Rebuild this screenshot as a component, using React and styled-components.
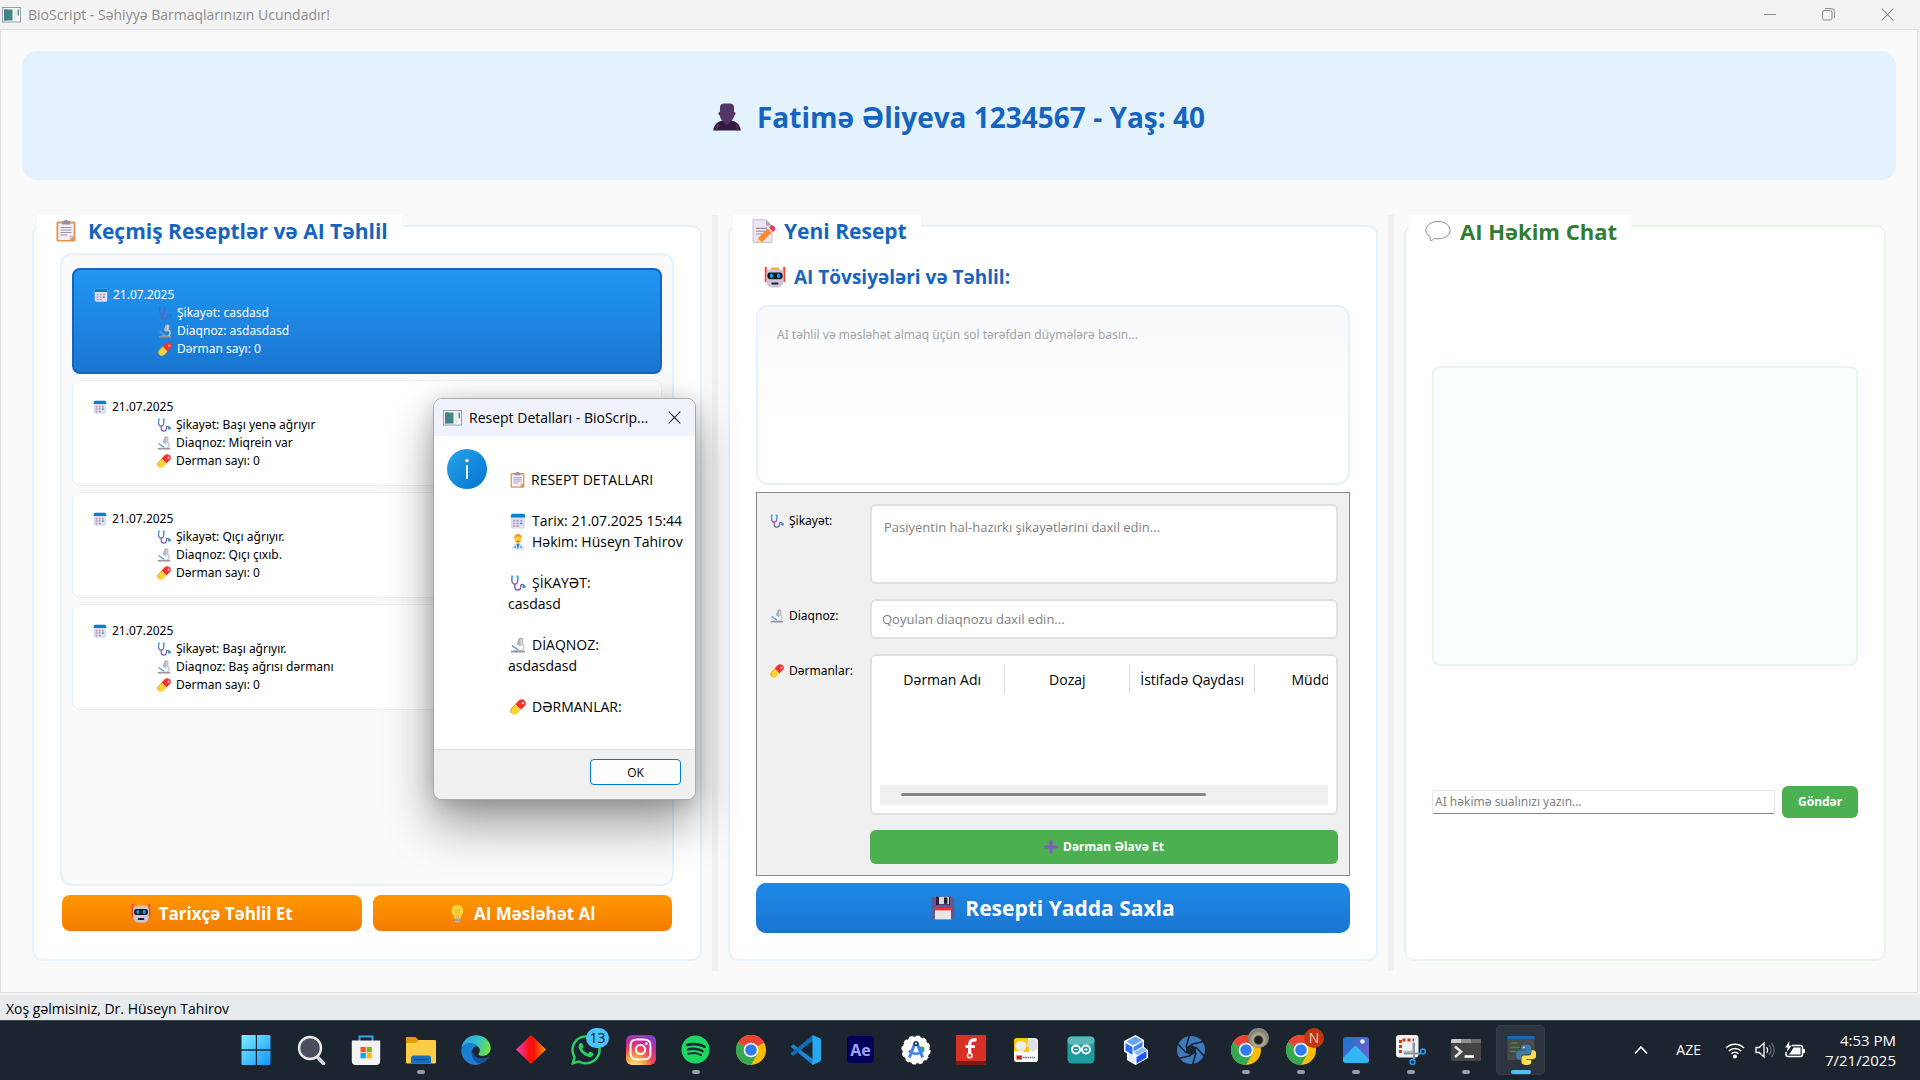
import React from "react";
import styled, { createGlobalStyle, css } from "styled-components";
import { FaWhatsapp, FaInstagram, FaSpotify } from "react-icons/fa";

const GlobalStyle = createGlobalStyle`
  *, *::before, *::after { box-sizing: border-box; }
  body { margin: 0; background: #1c2430; }
  body, button, input, textarea, table {
    font-family: "Open Sans", "Noto Sans", sans-serif;
  }
  h1, h2, h3, p, ul { margin: 0; padding: 0; }
`;

const smallText = css`
  font-family: "Noto Sans", "Open Sans", sans-serif;
  font-size: 12px;
  line-height: 18px;
`;

/* ---------- Icons ---------- */

const Glyph = styled.svg`
  flex: none;
  display: block;
  width: ${(p) => p.$w || p.$size || 16}px;
  height: ${(p) => p.$size || 16}px;
`;

const Clipboard = ({ size }) => (
  <Glyph viewBox="0 0 20 22" $w={Math.round((size * 20) / 22)} $size={size} aria-hidden="true">
    <rect x="0.5" y="1.5" width="19" height="20" rx="1.2" fill="#e19747" />
    <path d="M2.3 3.5h15.4v12l-4 4.5H2.3z" fill="#f3eef8" />
    <path d="M17.7 15.5h-4V20z" fill="#cdc4d6" />
    <path d="M6 1h2.200a1.800 1.400 0 0 1 3.600 0H14v3.400H6z" fill="#998ea4" />
    <path d="M4.500 7.500h11M4.500 10h11M4.500 12.500h11M4.500 15h6.500" stroke="#998ea4" strokeWidth="1" />
  </Glyph>
);

const Calendar = ({ size }) => (
  <Glyph viewBox="0 0 16 16" $size={size} aria-hidden="true">
    <rect x="0.800" y="0.800" width="14.400" height="15" rx="2" fill="#e3dcee" />
    <path d="M.8 4.600V2.800a2 2 0 0 1 2-2h10.400a2 2 0 0 1 2 2v1.800z" fill="#0084ce" />
    <rect x="3" y="6.800" width="2.200" height="1.600" fill="#a79bbd" />
    <rect x="6.600" y="6.800" width="2.200" height="1.600" fill="#a79bbd" />
    <rect x="10.200" y="6.800" width="2.200" height="1.600" fill="#a79bbd" />
    <rect x="3" y="9.600" width="2.200" height="1.600" fill="#a79bbd" />
    <rect x="6.600" y="9.600" width="2.200" height="1.600" fill="#a79bbd" />
    <rect x="10.200" y="9.600" width="2.200" height="1.600" fill="#1e9bea" />
    <rect x="3" y="12.400" width="2.200" height="1.600" fill="#a79bbd" />
    <rect x="6.600" y="12.400" width="2.200" height="1.600" fill="#a79bbd" />
  </Glyph>
);

const Stethoscope = ({ size, dim }) => (
  <Glyph viewBox="0 0 16 16" $size={size} aria-hidden="true" fill="none" strokeLinecap="round">
    <path d="M1.800 2v2.800c0 2.400 1.300 4.400 3 4.400s3-2 3-4.400V2" stroke={dim ? "#5a63b4" : "#7a63ad"} strokeWidth="1.400" />
    <path d="M4.800 9.200v2.800a3 3 0 0 0 6 0v-1.400c0-1.400 2.600-1.600 3.100.2" stroke={dim ? "#5a63b4" : "#7a63ad"} strokeWidth="1.400" />
    <path d="M1.800 3.600V1.200h1M7.800 3.600V1.200h-1" stroke={dim ? "#0d84dd" : "#37b4f4"} strokeWidth="1.500" />
    <circle cx="14.100" cy="11.600" r="1.700" fill={dim ? "#0d84dd" : "#1f9bf2"} />
  </Glyph>
);

const Microscope = ({ size }) => (
  <Glyph viewBox="0 0 16 16" $size={size} aria-hidden="true">
    <path d="M11.600 6.600c2.800 1.400 3 5 .4 7.200" fill="none" stroke="#cfcfd4" strokeWidth="1.800" />
    <path d="m8.600 1.200 2.800-.8 1.800 1.600-.4 4-2.600 3.200-3.600-2z" fill="#b3b3b8" />
    <path d="m10.400 1.400 1.800 1.400-.6 3.600-1.600 1.400z" fill="#d3d3d8" />
    <path d="m2.400 8.800 5 3.600" stroke="#5b9cf6" strokeWidth="1.500" strokeLinecap="round" />
    <path d="M4 13.600h9" stroke="#b8b8bd" strokeWidth="1" />
    <rect x="0.800" y="13.800" width="14.400" height="1.700" rx="0.500" fill="#96969c" />
  </Glyph>
);

const Pill = ({ size }) => (
  <Glyph viewBox="0 0 16 16" $size={size} aria-hidden="true">
    <g transform="rotate(45 8 8)">
      <path d="M4 8V2.900a4 4 0 0 1 8 0V8z" fill="#f8312f" />
      <path d="M4 8v5.100a4 4 0 0 0 8 0V8z" fill="#fdd13a" />
      <path d="M4.600 8v5c0 2 1.400 3.400 3.400 3.500" fill="none" stroke="#e9a520" strokeWidth="1" />
    </g>
    <circle cx="13" cy="4.200" r="1.100" fill="#fff" />
  </Glyph>
);

const Memo = ({ size }) => (
  <Glyph viewBox="0 0 24 24" $size={size} aria-hidden="true">
    <path d="M1 .8h13l6 6V23.400H1z" fill="#ece5f3" stroke="#bdb2c9" strokeWidth="0.800" />
    <path d="M14 .8v6h6z" fill="#b4a9c0" />
    <path d="M4 9.400h11M4 12.200h9M4 15h6" stroke="#998ea4" strokeWidth="1.100" />
    <path d="m6 19.200 9.600-9.600 4 4-9.600 9.600-5 .6z" fill="#ff8a2b" />
    <path d="m6 19.200 4 4-5 .6z" fill="#f5d3a8" />
    <path d="m17 8.200 1.400-1a2.400 2.400 0 0 1 3.600.2l.9 1.400a2.400 2.400 0 0 1-.3 2.800l-1.600 1.400z" fill="#f8315c" />
  </Glyph>
);

const Robot = ({ size }) => (
  <Glyph viewBox="0 0 22 22" $size={size} aria-hidden="true">
    <path d="M1.800 1v15M20.200 1v15" stroke="#f8412f" strokeWidth="2" />
    <rect x="7" y="1.400" width="8" height="3" rx="1" fill="#ffa726" />
    <path d="M5.400 3.600h11.200a3 3 0 0 1 3 3v8.200c0 4-2.600 6.600-5.400 6.600H7.800c-2.800 0-5.400-2.600-5.400-6.600V6.600a3 3 0 0 1 3-3z" fill="#cfc5da" />
    <rect x="3.400" y="6.600" width="15.200" height="6.600" rx="2.400" fill="#1c1c1c" />
    <rect x="6" y="7.800" width="3" height="4.200" rx="1.200" fill="#0aa2ee" />
    <rect x="13" y="7.800" width="3" height="4.200" rx="1.200" fill="#0aa2ee" />
    <rect x="7.400" y="16.400" width="7.200" height="2.200" rx="1" fill="#212121" />
  </Glyph>
);

const Bulb = ({ size }) => (
  <Glyph viewBox="0 0 18 20" $size={size} $w={size - 2} aria-hidden="true">
    <path d="M9 .8a6.300 6.300 0 0 1 6.300 6.300c0 3.400-2.500 4.600-2.900 8.100H5.600C5.200 11.700 2.700 10.500 2.700 7.100A6.300 6.300 0 0 1 9 .8z" fill="#fcd53f" />
    <path d="M7 6.200 8 14.800M11 6.200 10 14.800M6.500 6.200h5" stroke="#f9a825" strokeWidth="1" fill="none" />
    <path d="M6 15.200h6v2.600a1.600 1.600 0 0 1-1.600 1.600H7.600A1.600 1.600 0 0 1 6 17.800z" fill="#bdb7c9" />
    <path d="M6 17h6" stroke="#8a8198" strokeWidth="0.900" />
  </Glyph>
);

const Floppy = ({ size }) => (
  <Glyph viewBox="0 0 24 24" $size={size} aria-hidden="true">
    <path d="M.6.8H21l2.400 2.400v20H.6z" fill="#635994" />
    <rect x="4" y="14" width="16" height="9.400" fill="#e6e6e6" />
    <rect x="4" y="12" width="16" height="2.400" fill="#f8312f" />
    <rect x="5" y=".8" width="14" height="8.200" fill="#321b41" />
    <path d="M8 .8h10v7.400H8z" fill="#d9d9de" />
    <rect x="13" y="1.400" width="3.400" height="6.400" fill="#1c1c2c" />
  </Glyph>
);

const Plus = ({ size }) => (
  <Glyph viewBox="0 0 14 14" $size={size} aria-hidden="true">
    <path d="M7 1.400v11.200M1.400 7h11.200" stroke="#8457c7" strokeWidth="2.800" strokeLinecap="round" />
  </Glyph>
);

const Speech = () => (
  <Glyph viewBox="0 0 26 22" $w={26} $size={22} aria-hidden="true">
    <path d="M13 1.400c6.700 0 12.100 4 12.100 9s-5.400 8.400-12.100 8.400c-1.300 0-2.400.1-3.500-.4-1 .6-2.600 2.600-3.900 2.200-.8-.4-.2-2.400-.6-4.200C2.300 14.800.9 12.800.9 10.400c0-5 5.400-9 12.100-9z" fill="#fff" stroke="#8b8b8b" strokeWidth="1" />
  </Glyph>
);

const Person = () => (
  <Glyph viewBox="0 0 28 28" $size={28} aria-hidden="true">
    <path d="M.2 27.600c.6-5 3.600-9 8.600-9.800h10.400c5 .8 8 4.800 8.600 9.800z" fill="#321b41" />
    <path d="M3.600 27.600c.2-2.800.4-4 1.400-6.200M24.400 27.600c-.2-2.800-.4-4-1.400-6.200" stroke="#5b3a6e" strokeWidth="1.200" fill="none" />
    <path d="M7 4.600C7 1.800 8.800.4 11 .4h6c2.200 0 4 1.400 4 4.200v4.200c1.800 0 2.200 3.200.3 3.600-.5 2.600-1.900 4.600-3.500 6L14 22l-3.800-3.600c-1.600-1.400-3-3.400-3.500-6-1.900-.4-1.500-3.600.3-3.600z" fill="#533566" />
  </Glyph>
);

const Doctor = ({ size }) => (
  <Glyph viewBox="0 0 16 16" $size={size} aria-hidden="true">
    <path d="M2 15.800c0-4 2-6 4-6h4c2 0 4 2 4 6z" fill="#dfe3ea" />
    <path d="m6.400 9.600 1.600 6 1.600-6z" fill="#2a86d8" />
    <circle cx="5" cy="13" r="1" fill="#3fa3ef" />
    <circle cx="11" cy="13" r="1" fill="#3fa3ef" />
    <path d="M4.600 4.600a3.400 3.800 0 0 1 6.800 0c0 3-1.400 5.200-3.400 5.200S4.600 7.600 4.600 4.600z" fill="#ffc93b" />
    <path d="M4.300 5C3.800 1.800 6 0 8 0s4.200 1.800 3.700 5C11 2.800 9.600 2.400 8 2.400S5 2.800 4.300 5z" fill="#e79a22" />
    <path d="M6.800 7.400h2.400" stroke="#b02e38" strokeWidth="0.900" />
  </Glyph>
);

const WindowIcon = () => (
  <Glyph viewBox="0 0 19 16" $w={19} $size={16} aria-hidden="true">
    <rect x="0.500" y="0.500" width="18" height="14.500" fill="#f7f7f7" stroke="#98a0a6" />
    <rect x="2" y="2.500" width="8.500" height="11" fill="#3d8b7c" />
    <rect x="2" y="2.500" width="3.500" height="11" fill="#4a76a8" opacity="0.800" />
    <rect x="12" y="2.500" width="2.500" height="11" fill="#e6eaec" />
    <rect x="15.500" y="2.500" width="1.500" height="6" fill="#4d9a8a" />
  </Glyph>
);

const CloseMark = ({ color }) => (
  <Glyph viewBox="0 0 13 13" $size={13} aria-hidden="true">
    <path d="M.7.7l11.600 11.600M12.300.7.7 12.300" stroke={color} strokeWidth="1.100" />
  </Glyph>
);

/* ---------- Window shell ---------- */

const Desktop = styled.div`
  display: flex;
  flex-direction: column;
  min-height: 100vh;
  background: #f3f3f3;
  color: #000;
`;

const TitleBar = styled.header`
  display: flex;
  align-items: center;
  height: 29px;
  padding: 0 3px 0 2px;
  gap: 7px;
  font-size: 14px;
  line-height: 20px;
  color: #8b8b8b;
`;

const TitleText = styled.span`
  flex: 1;
`;

const WindowControls = styled.div`
  display: flex;
  align-items: center;
`;

const WindowButton = styled.button`
  display: flex;
  align-items: center;
  justify-content: center;
  width: 58px;
  height: 28px;
  padding: 0;
  border: 0;
  background: none;
  color: #8b8b8b;

  &:last-child {
    width: 60px;
  }
`;

const Workspace = styled.main`
  flex: 1;
  display: flex;
  flex-direction: column;
  gap: 35px;
  margin-right: 2px;
  padding: 21px;
  border: 1px solid #e1e1e1;
  background: #f9f9f9;
`;

const PatientBanner = styled.div`
  display: flex;
  align-items: center;
  justify-content: center;
  gap: 16px;
  height: 129px;
  padding-top: 2px;
  border-radius: 15px;
  background: #e3f2fd;
  color: #1565c0;
`;

const PatientName = styled.h1`
  font-size: 28px;
  line-height: 40px;
  font-weight: 700;
`;

const Columns = styled.div`
  flex: 1;
  display: grid;
  grid-template-columns: minmax(0, 690fr) 6px minmax(0, 670fr) 6px minmax(0, 502fr);
`;

const Splitter = styled.div`
  background: #f0f0f0;
`;

const Panel = styled.section`
  display: flex;
  flex-direction: column;
  margin: 10px;
  border: 2px solid ${(p) => (p.$tone === "green" ? "#e8f5e9" : "#e3f2fd")};
  border-radius: 10px;
  background: #fff;
`;

const PanelTitle = styled.h2`
  align-self: flex-start;
  display: flex;
  align-items: center;
  gap: ${(p) => p.$gap}px;
  height: 32px;
  margin: -12px 0 0 3px;
  padding: 0 14px 0 ${(p) => (p.$tone === "green" ? 16 : 19)}px;
  background: #fff;
  color: ${(p) => (p.$tone === "green" ? "#2e7d32" : "#1565c0")};
  font-size: ${(p) => (p.$tone === "green" ? 22 : 21)}px;
  line-height: 30px;
  font-weight: 700;
`;

const PanelBody = styled.div`
  flex: 1;
  display: flex;
  flex-direction: column;
  padding: 6px 26px 26px;
`;

/* ---------- History ---------- */

const HistoryList = styled.ul`
  flex: 1;
  display: flex;
  flex-direction: column;
  gap: 6px;
  padding: 13px 10px;
  border: 2px solid #e3f2fd;
  border-radius: 12px;
  background: #fafafa;
  list-style: none;
`;

const HistoryItem = styled.li`
  ${smallText}
  display: flex;
  flex-direction: column;
  height: 106px;
  padding: 17px 20px;
  border: 1px solid #e3f2fd;
  border-radius: 8px;
  background: #fff;

  ${(p) =>
    p.$selected &&
    css`
      padding: 16px 20px;
      border: 2px solid #1565c0;
      background: linear-gradient(#2196f3, #1976d2);
      color: #fff;
    `}
`;

const HistoryLine = styled.p`
  display: flex;
  align-items: center;
  gap: 5px;
  padding-left: ${(p) => (p.$nested ? 64 : 0)}px;
`;

const ButtonRow = styled.div`
  display: grid;
  grid-template-columns: 1fr 1fr;
  gap: 11px;
  padding: 9px 2px 2px;
`;

const Button = styled.button`
  display: flex;
  align-items: center;
  justify-content: center;
  gap: 8px;
  padding: 0;
  border: 0;
  color: #fff;
  font-weight: 700;
`;

const OrangeButton = styled(Button)`
  height: 36px;
  border-radius: 8px;
  background: linear-gradient(#ff9800, #f57c00);
  font-size: 17px;
`;

const GreenButton = styled(Button)`
  ${smallText}
  height: ${(p) => p.$height}px;
  border-radius: 6px;
  background: #4caf50;
  gap: 5px;
`;

const SaveButton = styled(Button)`
  height: 50px;
  margin-top: 7px;
  gap: 10px;
  border-radius: 10px;
  background: linear-gradient(#1e88e5, #1976d2);
  font-size: 21px;
`;

/* ---------- Prescription form ---------- */

const AdviceLabel = styled.label`
  display: flex;
  align-items: center;
  gap: 8px;
  height: 52px;
  padding: 0 8px 4px;
  color: #1565c0;
  font-size: 19px;
  line-height: 28px;
  font-weight: 700;
`;

const AdviceBox = styled.textarea`
  ${smallText}
  flex: 1;
  min-height: 180px;
  padding: 19px 19px;
  border: 2px solid #e3f2fd;
  border-radius: 12px;
  background: linear-gradient(#f8f9fa, #fff 70%);
  resize: none;
  outline: none;

  &::placeholder {
    color: #9ea3a8;
    opacity: 1;
  }
`;

const FormFrame = styled.form`
  display: grid;
  grid-template-columns: 102px minmax(0, 1fr);
  row-gap: 15px;
  margin-top: 7px;
  padding: 11px;
  border: 1px solid #828790;
  background: #f0f0f0;
`;

const FieldLabel = styled.label`
  ${smallText}
  align-self: start;
  display: flex;
  align-items: center;
  gap: 5px;
  padding: 8px 0 0 2px;
`;

const fieldBox = css`
  width: 100%;
  border: 2px solid #e0e0e0;
  border-radius: 6px;
  background: #fff;
`;

const placeholderText = css`
  font-size: 13px;
  line-height: 20px;
  outline: none;

  &::placeholder {
    color: #7f7f7f;
    opacity: 1;
  }
`;

const ComplaintBox = styled.textarea`
  ${fieldBox}
  ${placeholderText}
  display: block;
  height: 80px;
  padding: 11px 12px;
  resize: none;
`;

const DiagnosisBox = styled.input`
  ${fieldBox}
  ${placeholderText}
  height: 40px;
  padding: 0 10px;
`;

const MedicineBox = styled.div`
  ${fieldBox}
  display: flex;
  flex-direction: column;
  justify-content: space-between;
  height: 161px;
  padding: 8px;
`;

const MedicineClip = styled.div`
  overflow: hidden;
`;

const MedicineTable = styled.table`
  width: 500px;
  table-layout: fixed;
  border-collapse: collapse;

  th {
    height: 30px;
    padding: 2px 0 0;
    border-right: 1px solid #dcdcdc;
    font-size: 14px;
    line-height: 20px;
    font-weight: 400;
    text-align: center;
    white-space: nowrap;
  }
`;

const ScrollTrack = styled.div`
  height: 20px;
  padding: 8px 21px;
  background: #f0f0f0;
`;

const ScrollThumb = styled.div`
  width: 75%;
  height: 3px;
  border-radius: 2px;
  background: #858585;
`;

/* ---------- Chat ---------- */

const ChatBody = styled(PanelBody)`
  justify-content: space-evenly;
  padding: 0 26px 22px;
`;

const ChatLog = styled.div`
  height: 300px;
  border: 2px solid #e8f5e9;
  border-radius: 8px;
  background: #f8fffe;
`;

const ChatForm = styled.form`
  display: grid;
  grid-template-columns: minmax(0, 1fr) 76px;
  align-items: center;
  gap: 7px;
`;

const ChatInput = styled.input`
  ${smallText}
  height: 24px;
  padding: 0 2px;
  border: 1px solid #e5e5e5;
  border-bottom-color: #868686;
  border-radius: 2px;
  outline: none;

  &::placeholder {
    color: #7f7f7f;
    opacity: 1;
  }
`;

/* ---------- Dialog ---------- */

const Dialog = styled.div`
  position: absolute;
  left: 433px;
  top: 398px;
  width: 263px;
  border: 1px solid #a9a9a9;
  border-radius: 9px;
  background: #fff;
  box-shadow: 0 24px 48px rgba(0, 0, 0, 0.38), 0 2px 20px rgba(0, 0, 0, 0.16);
  overflow: hidden;
  font-size: 14px;
`;

const DialogTitle = styled.div`
  display: flex;
  align-items: center;
  gap: 7px;
  height: 37px;
  padding: 0 14px 0 9px;
  background: #eff2fa;
  line-height: 20px;
  white-space: nowrap;

  h2 {
    flex: 1;
    font-size: 14px;
    font-weight: 400;
  }
`;

const DialogClose = styled.button`
  padding: 0;
  border: 0;
  background: none;
`;

const DialogBody = styled.div`
  display: flex;
  gap: 21px;
  height: 313px;
  padding: 13px 0 0 13px;
`;

const DialogText = styled.div`
  display: flex;
  flex-direction: column;
  gap: 20px;
  padding-top: 20px;
  line-height: 21px;
  white-space: nowrap;
`;

const DialogLine = styled.p`
  display: flex;
  align-items: center;
  gap: 6px;
  padding-left: ${(p) => (p.$icon ? 2 : 0)}px;
`;

const DialogFooter = styled.div`
  display: flex;
  justify-content: flex-end;
  height: 50px;
  padding: 9px 14px;
  border-top: 1px solid #dfdfdf;
  background: #f0f0f0;
`;

const OkButton = styled.button`
  width: 91px;
  height: 26px;
  padding: 0;
  border: 1px solid #0078d4;
  border-radius: 4px;
  background: #fdfdfd;
  color: #000;
  font-size: 12px;
`;

/* ---------- Status bar and taskbar ---------- */

const StatusBar = styled.footer`
  height: 27px;
  padding: 5px 6px 0;
  border-top: 2px solid #f3f3f3;
  background: #e8ebee;
  font-size: 14px;
  line-height: 18px;
`;

const Taskbar = styled.nav`
  display: flex;
  align-items: center;
  height: 60px;
  padding: 0 24px 2px 228px;
  border-top: 1px solid #3d454e;
  background: #1c2430;
  color: #fff;
`;

const TaskItem = styled.button`
  position: relative;
  display: flex;
  align-items: center;
  justify-content: center;
  flex: none;
  width: 49px;
  height: 50px;
  margin: 0 3px;
  padding: 0;
  border: 0;
  border-radius: 5px;
  background: ${(p) => (p.$active ? "#2c3440" : "none")};
  box-shadow: ${(p) => (p.$active ? "inset 0 0 0 1px #343c47" : "none")};

  &::after {
    content: "";
    position: absolute;
    left: 50%;
    bottom: 1px;
    width: ${(p) => (p.$active ? 20 : p.$open ? 8 : 0)}px;
    height: 4px;
    border-radius: 2px;
    background: ${(p) => (p.$active ? "#4cc2ff" : "#9a9ea4")};
    transform: translateX(-50%);
  }
`;

const Badge = styled.span`
  position: absolute;
  top: 3px;
  right: 1px;
  display: flex;
  align-items: center;
  justify-content: center;
  width: ${(p) => p.$size}px;
  height: 20px;
  border-radius: 11px;
  background: ${(p) => p.$bg};
  color: ${(p) => p.$color};
  font-size: 14px;
  line-height: 20px;
`;

const Tile = styled.span`
  display: flex;
  align-items: center;
  justify-content: center;
  width: ${(p) => p.$size}px;
  height: ${(p) => p.$size}px;
  border-radius: ${(p) => p.$radius}px;
  background: ${(p) => p.$bg};
  color: ${(p) => p.$color};
  font-size: 16px;
  line-height: 24px;
  font-weight: 700;
`;

const Tray = styled.div`
  display: flex;
  align-items: center;
  margin-left: auto;
  font-size: 15px;
  line-height: 20px;
`;

const TrayButton = styled.button`
  display: flex;
  align-items: center;
  gap: 10px;
  padding: 0;
  border: 0;
  margin-right: ${(p) => p.$after}px;
  background: none;
  color: #fff;
  font-size: 14px;
`;

const Clock = styled.div`
  text-align: right;
`;

const Svg30 = ({ children }) => (
  <Glyph viewBox="0 0 30 30" $size={30} aria-hidden="true">
    {children}
  </Glyph>
);

const ChromeLogo = () => (
  <Svg30>
    <circle cx="15" cy="15" r="15" fill="#fbbc05" />
    <path d="M15 15 2 7.500A15 15 0 0 1 28 7.500z" fill="#ea4335" />
    <path d="M15 0a15 15 0 0 1 13 7.500H15z" fill="#ea4335" />
    <path d="M2 7.500A15 15 0 0 0 15 30l6.500-11.250L8.500 18.750z" fill="#34a853" />
    <path d="M2 7.500 8.500 18.750 15 15z" fill="#34a853" />
    <circle cx="15" cy="15" r="7.300" fill="#fff" />
    <circle cx="15" cy="15" r="5.800" fill="#2f7bf0" />
  </Svg30>
);

const apps = [
  {
    name: "Start",
    icon: (
      <Svg30>
        <defs>
          <linearGradient id="win" x1="0" y1="0" x2="1" y2="1">
            <stop offset="0" stopColor="#7deeff" />
            <stop offset="1" stopColor="#1396fb" />
          </linearGradient>
        </defs>
        <path d="M1.500 0H15v14.500H.5V1a1 1 0 0 1 1-1zM15.800 0H28.500a1 1 0 0 1 1 1v13.500H15.800zM.5 15.500H15V30H1.500a1 1 0 0 1-1-1zM15.800 15.500h13.700V29a1 1 0 0 1-1 1H15.800z" fill="url(#win)" />
        <path d="M15.300 0v30M.5 15h29" stroke="#1c2430" strokeWidth="1" />
      </Svg30>
    ),
  },
  {
    name: "Search",
    icon: (
      <Svg30>
        <path d="m20.500 21 7 7.500" stroke="#d8dade" strokeWidth="3.600" strokeLinecap="round" />
        <circle cx="14" cy="13" r="11" fill="#4a505b" stroke="#ececee" strokeWidth="2.400" />
      </Svg30>
    ),
  },
  {
    name: "Store",
    icon: (
      <Svg30>
        <path d="M8.500 6V1.500h13V6" fill="none" stroke="#2ea8ee" strokeWidth="2" />
        <path d="M.8 5.500h28.400V26a4 4 0 0 1-4 4H4.800a4 4 0 0 1-4-4z" fill="#f3f3f4" />
        <path d="M9.500 12h5.300v5.300H9.500z" fill="#f35325" />
        <path d="M15.600 12h5.300v5.300h-5.300z" fill="#7fba00" />
        <path d="M9.500 18h5.300v5.300H9.500z" fill="#05a6f0" />
        <path d="M15.600 18h5.300v5.300h-5.300z" fill="#ffba08" />
      </Svg30>
    ),
  },
  {
    name: "File Explorer",
    open: true,
    icon: (
      <Svg30>
        <path d="M0 3a1 1 0 0 1 1-1h8.500l3 3H20v6H0z" fill="#e39c06" />
        <path d="M0 8h10l3-3h16a1 1 0 0 1 1 1v21.500a1 1 0 0 1-1 1H1a1 1 0 0 1-1-1z" fill="#fdcc45" />
        <path d="M5 28.500V23a2.500 2.500 0 0 1 2.500-2.500h15A2.500 2.500 0 0 1 25 23v5.500z" fill="#1371c0" />
        <path d="M8.500 24.500h13" stroke="#0b4d8c" strokeWidth="1.400" />
      </Svg30>
    ),
  },
  {
    name: "Edge",
    icon: (
      <Svg30>
        <defs>
          <linearGradient id="edgeTop" x1="0" y1="0" x2="1" y2="0.300">
            <stop offset="0" stopColor="#2ba0e0" />
            <stop offset="0.600" stopColor="#35c1c8" />
            <stop offset="1" stopColor="#6be04b" />
          </linearGradient>
        </defs>
        <path d="M.4 13C1.500 5.500 7.500.3 15 .3c8.600 0 14.700 6 14.700 12.700 0 5-3.900 7.800-7.900 7.800-3.600 0-4.600-1.500-4-2.400 1.500-2 1.400-4 .2-5.600C14 7.600 4.600 7.200.4 13z" fill="url(#edgeTop)" />
        <path d="M.3 15.500C.5 10.500 5 7.800 9.500 8c3.500.2 6.500 1.800 8 4-3.500-1.500-6.700 1.300-6.700 5.500 0 6.500 5.500 11.300 9.700 10.800C18.500 29.500 16.700 30 14.500 30 6.500 29.500 0 23.500.3 15.500z" fill="#1a7fd4" />
        <path d="M11 15.500c-1.300 8 4 13.700 9.500 12.800 3.200-1 5.700-3 7.200-5.600.3-.6-.2-.9-.7-.6-6.500 3-14.500.4-16-6.600z" fill="#12549c" />
      </Svg30>
    ),
  },
  {
    name: "Media",
    icon: (
      <Svg30>
        <defs>
          <linearGradient id="gem">
            <stop offset="0" stopColor="#ec3fc0" />
            <stop offset="0.450" stopColor="#f8120c" />
            <stop offset="0.600" stopColor="#f8120c" />
            <stop offset="1" stopColor="#ff9d00" />
          </linearGradient>
        </defs>
        <path d="M15 0 30 14.500 15 29 0 14.500z" fill="url(#gem)" />
      </Svg30>
    ),
  },
  {
    name: "WhatsApp",
    icon: <FaWhatsapp size={34} color="#25d366" />,
    badge: { text: "13", bg: "#4cc2ff", color: "#10202c", size: 23 },
  },
  {
    name: "Instagram",
    icon: (
      <Tile
        $size={30}
        $radius={6}
        $bg="radial-gradient(circle at 28% 105%, #ffd776 8%, #f9a03f 28%, #f0455a 48%, #c32b9c 68%, #5b4fdc 100%)"
        $color="#fff"
      >
        <FaInstagram size={25} />
      </Tile>
    ),
  },
  {
    name: "Spotify",
    open: true,
    icon: <FaSpotify size={29} color="#1ed760" />,
  },
  { name: "Chrome", icon: <ChromeLogo /> },
  {
    name: "Visual Studio Code",
    icon: (
      <Svg30>
        <path d="M2.400 9.200 22 24.200V30L.6 12.500c-.8-.7-.7-1.400 0-2z" fill="#1b86cf" />
        <path d="M2.400 20.800 22 5.800V0L.6 17.500c-.8.7-.7 1.400 0 2z" fill="#0f6fb5" />
        <path d="m21.500 0 7.300 3.300c.8.400 1.200.9 1.200 1.700v20c0 .8-.4 1.300-1.200 1.700L21.500 30z" fill="#27a9f1" />
      </Svg30>
    ),
  },
  {
    name: "After Effects",
    icon: (
      <Tile $size={27} $radius={4} $bg="#00005b" $color="#a3a3ff">
        Ae
      </Tile>
    ),
  },
  {
    name: "Android Studio",
    icon: (
      <Svg30>
        <circle cx="15" cy="15" r="13.600" fill="#fff" />
        <circle cx="15" cy="15" r="13.600" fill="none" stroke="#fff" strokeWidth="2" strokeDasharray="4 3.100" />
        <circle cx="20.500" cy="14.500" r="3" fill="#34a853" />
        <path d="m14 8-5.600 14.500M16 8l5.600 14.500" stroke="#3f83f2" strokeWidth="3" />
        <path d="M8 15.500c4 4.400 10 4.400 14 0" fill="none" stroke="#3f83f2" strokeWidth="2.600" />
        <circle cx="15" cy="8.500" r="2.600" fill="#1d3557" />
        <circle cx="15" cy="8.500" r="1" fill="#fff" />
      </Svg30>
    ),
  },
  {
    name: "Fritzing",
    icon: (
      <Svg30>
        <path d="M0 0h30v30H0z" fill="#d93025" />
        <path d="M0 26h30v4H0z" fill="#7c1a10" />
        <path d="M20.500 5c-5-.8-6.800 1-6.800 5V18M9.500 11.500h9.500" fill="none" stroke="#fff" strokeWidth="3.200" />
        <circle cx="13.700" cy="20.500" r="2.200" fill="#d93025" stroke="#fff" strokeWidth="1.600" />
      </Svg30>
    ),
  },
  {
    name: "Education kit",
    icon: (
      <Svg30>
        <rect x="3" y="3" width="24" height="24" rx="3.500" fill="#f4f4f4" />
        <path d="M3 6.500A3.500 3.500 0 0 1 6.500 3H17v13H3z" fill="#fbc902" />
        <rect x="4.500" y="6" width="11" height="10" rx="5" fill="#ececec" />
        <rect x="16.500" y="4" width="10" height="12" rx="5" fill="#e0e0e0" />
        <path d="M3 17h24v6.500a3.500 3.500 0 0 1-3.500 3.500h-17A3.500 3.500 0 0 1 3 23.500z" fill="#fafafa" />
        <path d="M15 12h3v5h-8c3 0 5-2 5-5z" fill="#fbc902" />
        <rect x="5.500" y="20.500" width="5.500" height="4" fill="#d8201c" />
        <path d="M12 22.500h12" stroke="#777" strokeWidth="1.400" strokeDasharray="1.600 0.600" />
      </Svg30>
    ),
  },
  {
    name: "Arduino",
    icon: (
      <Svg30>
        <rect x="1.500" y="1.500" width="27" height="27" rx="4.500" fill="#1f9a9e" />
        <rect x="1.500" y="1.500" width="27" height="8" rx="4" fill="#5ab7b8" />
        <circle cx="10" cy="14.500" r="4" fill="none" stroke="#fff" strokeWidth="2" />
        <circle cx="20" cy="14.500" r="4" fill="none" stroke="#fff" strokeWidth="2" />
        <path d="M8.400 14.500h3.200M18.400 14.500h3.200M20 12.900v3.200" stroke="#fff" strokeWidth="1" />
      </Svg30>
    ),
  },
  {
    name: "3D printing",
    icon: (
      <Svg30>
        <path d="M14.500 0 3 6v10.500l3 2V25l8.500 5L27 23v-8l-4-3V5z" fill="#fff" />
        <path d="m14.500 1.500-9 5 6.500 4 9-5z" fill="#62a4f8" />
        <path d="M4.500 8v7.500l7 4.500v-8z" fill="#2b6cf4" />
        <path d="M12.500 12 21.500 6.500v5l-9 5z" fill="#3f86f8" />
        <path d="m13 17.500 8.500-5 4.500 2.500-9.500 5.500z" fill="#8ab9fb" />
        <path d="M8 19.500v5l6.500 4v-5z" fill="#dfe9fb" />
        <path d="M15.500 22 25.500 16v6.500L15.500 28.500z" fill="#1b55f0" />
      </Svg30>
    ),
  },
  {
    name: "Camera",
    icon: (
      <Svg30>
        <circle cx="15" cy="15" r="14" fill="#3c7bbf" />
        <path d="M15 9.500 20 12.300v5.400L15 20.500l-5-2.800v-5.400z" fill="#1c2430" />
        <path d="M10 12.500 13.500 0M15 9.500 27.500 6.500M20 12.300l8.500 9.200M20 17.700 16.500 30M15 20.500 2.500 23.500M10 17.700 1.500 8.500" stroke="#1c2430" strokeWidth="1.600" />
      </Svg30>
    ),
  },
  {
    name: "Chrome profile",
    open: true,
    icon: <ChromeLogo />,
    badge: { text: "", bg: "radial-gradient(circle at 50% 60%, #202024 22%, #b5ad8a 34%, #7d8078 60%, #a9aba4 90%)", color: "#fff", size: 21 },
  },
  {
    name: "Chrome profile N",
    open: true,
    icon: <ChromeLogo />,
    badge: { text: "N", bg: "#bf360c", color: "#f3c8b8", size: 20 },
  },
  {
    name: "Photos",
    open: true,
    icon: (
      <Svg30>
        <defs>
          <linearGradient id="photo" x1="0" y1="0" x2="1" y2="0.600">
            <stop offset="0" stopColor="#1673d1" />
            <stop offset="1" stopColor="#6c62c8" />
          </linearGradient>
        </defs>
        <rect x="2" y="2" width="26" height="26" rx="3" fill="url(#photo)" />
        <path d="M2 23 12.500 12c1.400-1.400 2.600-1.400 4 0L28 24.500V25a3 3 0 0 1-3 3H5a3 3 0 0 1-3-3z" fill="#2fb6f3" />
        <circle cx="21.500" cy="6.500" r="2.300" fill="#e9f4ff" />
      </Svg30>
    ),
  },
  {
    name: "Snipping Tool",
    open: true,
    icon: (
      <Svg30>
        <rect x="0" y="0" width="22.500" height="22.500" rx="3" fill="#f0f1f4" />
        <path d="M4.500 18V5H18" fill="none" stroke="#d83b01" strokeWidth="3" strokeDasharray="3 2" />
        <path d="M17.500 7.500V17H7.500" fill="none" stroke="#b9bcc4" strokeWidth="2.600" />
        <path d="M18 8v16M8 18.500h17" stroke="#8e939e" strokeWidth="2" />
        <circle cx="27" cy="16.500" r="2.400" fill="none" stroke="#1e9be9" strokeWidth="1.600" />
        <circle cx="16.500" cy="27" r="2.400" fill="none" stroke="#1e9be9" strokeWidth="1.600" />
      </Svg30>
    ),
  },
  {
    name: "Terminal",
    open: true,
    icon: (
      <Svg30>
        <rect x="0" y="4" width="30" height="22" rx="1.500" fill="#454545" />
        <path d="M0 8V5.500A1.500 1.500 0 0 1 1.500 4H10v4z" fill="#c9c9c9" />
        <path d="M10 4h10v4H10z" fill="#929292" />
        <path d="M20 4h8.500A1.500 1.500 0 0 1 30 5.500V8H20z" fill="#6c6c6c" />
        <path d="m4 11.500 6 5.200-6 5.200" fill="none" stroke="#e2e2e2" strokeWidth="2.600" />
        <path d="M13.500 21.500h9.500" stroke="#fff" strokeWidth="2.600" />
      </Svg30>
    ),
  },
  {
    name: "Python",
    active: true,
    icon: (
      <Svg30>
        <rect x="1.500" y="1" width="27" height="24" fill="#4a4a4c" />
        <rect x="1.500" y="1" width="27" height="2.800" fill="#0f6cbd" />
        <path d="M4.500 8h7M4.500 12.500h9M4.500 16.500h6" stroke="#3d8a3d" strokeWidth="1.300" />
        <path d="M20 9.500c-3.600 0-4.600 1.400-4.600 3v2.300h5v.8h-7c-2.300 0-3.400 1.900-3.400 4.600s1.400 4.600 3 4.600h2v-2.500c0-1.800 1.300-3 3-3h4.500c1.500 0 2.500-1.200 2.500-2.700v-4.100c0-1.800-1.800-3-5-3z" fill="#3f7cac" />
        <path d="M20.500 30c3.600 0 4.800-1.400 4.800-3v-2.300h-5v-.8h6.600c2.300 0 3.400-1.700 3.400-4.400s-1.200-4.300-3-4.300h-1.800v2.300c0 1.800-1.300 3-3 3H18c-1.500 0-2.500 1.200-2.500 2.700V27c0 1.800 1.800 3 5 3z" fill="#ffdc50" />
        <circle cx="17.700" cy="12.300" r="0.900" fill="#fff" />
        <circle cx="22.800" cy="27.400" r="0.900" fill="#fff" />
      </Svg30>
    ),
  },
];

/* ---------- Data ---------- */

const history = [
  { date: "21.07.2025", complaint: "casdasd", diagnosis: "asdasdasd", count: 0, selected: true },
  { date: "21.07.2025", complaint: "Başı yenə ağrıyır", diagnosis: "Miqrein var", count: 0 },
  { date: "21.07.2025", complaint: "Qıçı ağrıyır.", diagnosis: "Qıçı çıxıb.", count: 0 },
  { date: "21.07.2025", complaint: "Başı ağrıyır.", diagnosis: "Baş ağrısı dərmanı", count: 0 },
];

const medicineColumns = ["Dərman Adı", "Dozaj", "İstifadə Qaydası", "Müddət"];

const details = [
  [{ icon: <Clipboard size={16} />, text: "RESEPT DETALLARI" }],
  [
    { icon: <Calendar size={16} />, text: "Tarix: 21.07.2025 15:44" },
    { icon: <Doctor size={16} />, text: "Həkim: Hüseyn Tahirov" },
  ],
  [{ icon: <Stethoscope size={16} />, text: "ŞİKAYƏT:" }, { text: "casdasd" }],
  [{ icon: <Microscope size={16} />, text: "DİAQNOZ:" }, { text: "asdasdasd" }],
  [{ icon: <Pill size={16} />, text: "DƏRMANLAR:" }],
];

/* ---------- Sections ---------- */

const HistoryPanel = () => (
  <Panel>
    <PanelTitle $gap={12}>
      <Clipboard size={22} />
      Keçmiş Reseptlər və AI Təhlil
    </PanelTitle>
    <PanelBody>
      <HistoryList>
        {history.map((h, i) => (
          <HistoryItem key={i} $selected={h.selected}>
            <HistoryLine>
              <Calendar size={14} />
              {h.date}
            </HistoryLine>
            <HistoryLine $nested>
              <Stethoscope size={14} dim={h.selected} />
              Şikayət: {h.complaint}
            </HistoryLine>
            <HistoryLine $nested>
              <Microscope size={14} />
              Diaqnoz: {h.diagnosis}
            </HistoryLine>
            <HistoryLine $nested>
              <Pill size={14} />
              Dərman sayı: {h.count}
            </HistoryLine>
          </HistoryItem>
        ))}
      </HistoryList>
      <ButtonRow>
        <OrangeButton type="button">
          <Robot size={20} />
          Tarixçə Təhlil Et
        </OrangeButton>
        <OrangeButton type="button">
          <Bulb size={19} />
          AI Məsləhət Al
        </OrangeButton>
      </ButtonRow>
    </PanelBody>
  </Panel>
);

const PrescriptionPanel = () => (
  <Panel>
    <PanelTitle $gap={8}>
      <Memo size={24} />
      Yeni Resept
    </PanelTitle>
    <PanelBody>
      <AdviceLabel htmlFor="advice">
        <Robot size={22} />
        AI Tövsiyələri və Təhlil:
      </AdviceLabel>
      <AdviceBox id="advice" placeholder="AI təhlil və məsləhət almaq üçün sol tərəfdən düymələrə basın..." />
      <FormFrame>
        <FieldLabel htmlFor="complaint">
          <Stethoscope size={14} />
          Şikayət:
        </FieldLabel>
        <ComplaintBox id="complaint" placeholder="Pasiyentin hal-hazırkı şikayətlərini daxil edin..." />
        <FieldLabel htmlFor="diagnosis">
          <Microscope size={14} />
          Diaqnoz:
        </FieldLabel>
        <DiagnosisBox id="diagnosis" placeholder="Qoyulan diaqnozu daxil edin..." />
        <FieldLabel as="span" id="medicines">
          <Pill size={14} />
          Dərmanlar:
        </FieldLabel>
        <MedicineBox>
          <MedicineClip>
            <MedicineTable aria-labelledby="medicines">
              <thead>
                <tr>
                  {medicineColumns.map((c) => (
                    <th key={c} scope="col">
                      {c}
                    </th>
                  ))}
                </tr>
              </thead>
            </MedicineTable>
          </MedicineClip>
          <ScrollTrack>
            <ScrollThumb />
          </ScrollTrack>
        </MedicineBox>
        <span />
        <GreenButton type="button" $height={34}>
          <Plus size={14} />
          Dərman Əlavə Et
        </GreenButton>
      </FormFrame>
      <SaveButton type="button">
        <Floppy size={24} />
        Resepti Yadda Saxla
      </SaveButton>
    </PanelBody>
  </Panel>
);

const ChatPanel = () => (
  <Panel $tone="green">
    <PanelTitle $tone="green" $gap={9}>
      <Speech />
      AI Həkim Chat
    </PanelTitle>
    <ChatBody>
      <ChatLog />
      <ChatForm>
        <ChatInput type="text" aria-label="AI həkimə sual" placeholder="AI həkimə sualınızı yazın..." />
        <GreenButton type="button" $height={32}>
          Göndər
        </GreenButton>
      </ChatForm>
    </ChatBody>
  </Panel>
);

const DetailsDialog = () => (
  <Dialog role="dialog" aria-labelledby="details-title">
    <DialogTitle>
      <WindowIcon />
      <h2 id="details-title">Resept Detalları - BioScrip...</h2>
      <DialogClose type="button" aria-label="Bağla">
        <CloseMark color="#1a1a1a" />
      </DialogClose>
    </DialogTitle>
    <DialogBody>
      <Glyph viewBox="0 0 40 40" $size={40} aria-hidden="true">
        <defs>
          <linearGradient id="info" x1="0" y1="0" x2="1" y2="1">
            <stop offset="0" stopColor="#2aa5ea" />
            <stop offset="1" stopColor="#0072cf" />
          </linearGradient>
        </defs>
        <circle cx="20" cy="20" r="20" fill="url(#info)" />
        <circle cx="20" cy="11.500" r="1.700" fill="#fff" />
        <path d="M20 16v14" stroke="#fff" strokeWidth="1.800" />
      </Glyph>
      <DialogText>
        {details.map((group, i) => (
          <div key={i}>
            {group.map((line) => (
              <DialogLine key={line.text} $icon={!!line.icon}>
                {line.icon}
                {line.text}
              </DialogLine>
            ))}
          </div>
        ))}
      </DialogText>
    </DialogBody>
    <DialogFooter>
      <OkButton type="button">OK</OkButton>
    </DialogFooter>
  </Dialog>
);

const SystemTray = () => (
  <Tray>
    <TrayButton type="button" aria-label="Gizli nişanlar" $after={28}>
      <Glyph viewBox="0 0 14 10" $w={14} $size={10} fill="none">
        <path d="M1 8.500 7 2l6 6.500" stroke="#fff" strokeWidth="1.700" />
      </Glyph>
    </TrayButton>
    <TrayButton type="button" $after={24}>AZE</TrayButton>
    <TrayButton type="button" aria-label="Şəbəkə, səs və batareya" $after={20}>
      <Glyph viewBox="0 0 20 18" $w={20} $size={18} fill="none" stroke="#fff" strokeWidth="1.500">
        <path d="M1 7a12.500 12.500 0 0 1 18 0M3.800 10a8.800 8.800 0 0 1 12.400 0M6.500 12.800a5 5 0 0 1 7 0" />
        <circle cx="10" cy="15.500" r="1.300" fill="#fff" />
      </Glyph>
      <Glyph viewBox="0 0 20 18" $w={20} $size={18} fill="none" stroke="#fff" strokeWidth="1.300">
        <path d="M1 6.500h3.200L9 2v14l-4.800-4.500H1z" />
        <path d="M11.500 6.200a4 4 0 0 1 0 5.600" />
        <path d="M14 4a7.300 7.300 0 0 1 0 10M16.500 2a10.500 10.500 0 0 1 0 14" stroke="#626a75" />
      </Glyph>
      <Glyph viewBox="0 0 20 18" $w={20} $size={18}>
        <path d="M7 4.500h8.500a2 2 0 0 1 2 2v7a2 2 0 0 1-2 2H3a2 2 0 0 1-2-2V11" fill="none" stroke="#fff" strokeWidth="1.500" />
        <path d="M18 8h2v4h-2z" fill="#fff" />
        <path d="M8.500 6.500h7v7H3.500l2-2z" fill="#fff" />
        <path d="M4.500 0 0 6.500h3L1.500 11 7 4.500H4z" fill="#fff" />
      </Glyph>
    </TrayButton>
    <Clock>
      4:53 PM
      <br />
      7/21/2025
    </Clock>
  </Tray>
);

export default function App() {
  return (
    <Desktop>
      <GlobalStyle />
      <TitleBar>
        <WindowIcon />
        <TitleText>BioScript - Səhiyyə Barmaqlarınızın Ucundadır!</TitleText>
        <WindowControls>
          <WindowButton type="button" aria-label="Kiçilt">
            <Glyph viewBox="0 0 12 12" $size={12}>
              <path d="M0 5.500h12" stroke="currentColor" />
            </Glyph>
          </WindowButton>
          <WindowButton type="button" aria-label="Bərpa et">
            <Glyph viewBox="0 0 13 13" $size={13} fill="none" stroke="currentColor">
              <rect x="0.500" y="2.500" width="9.500" height="9.500" rx="1.500" />
              <path d="M3 .6h6.500a3 3 0 0 1 3 3V10" />
            </Glyph>
          </WindowButton>
          <WindowButton type="button" aria-label="Bağla">
            <CloseMark color="#8b8b8b" />
          </WindowButton>
        </WindowControls>
      </TitleBar>
      <Workspace>
        <PatientBanner>
          <Person />
          <PatientName>Fatimə Əliyeva 1234567 - Yaş: 40</PatientName>
        </PatientBanner>
        <Columns>
          <HistoryPanel />
          <Splitter />
          <PrescriptionPanel />
          <Splitter />
          <ChatPanel />
        </Columns>
      </Workspace>
      <StatusBar>Xoş gəlmisiniz, Dr. Hüseyn Tahirov</StatusBar>
      <Taskbar aria-label="Tapşırıqlar paneli">
        {apps.map((a) => (
          <TaskItem key={a.name} type="button" aria-label={a.name} $open={a.open} $active={a.active}>
            {a.icon}
            {a.badge && (
              <Badge $bg={a.badge.bg} $color={a.badge.color} $size={a.badge.size}>
                {a.badge.text}
              </Badge>
            )}
          </TaskItem>
        ))}
        <SystemTray />
      </Taskbar>
      <DetailsDialog />
    </Desktop>
  );
}
